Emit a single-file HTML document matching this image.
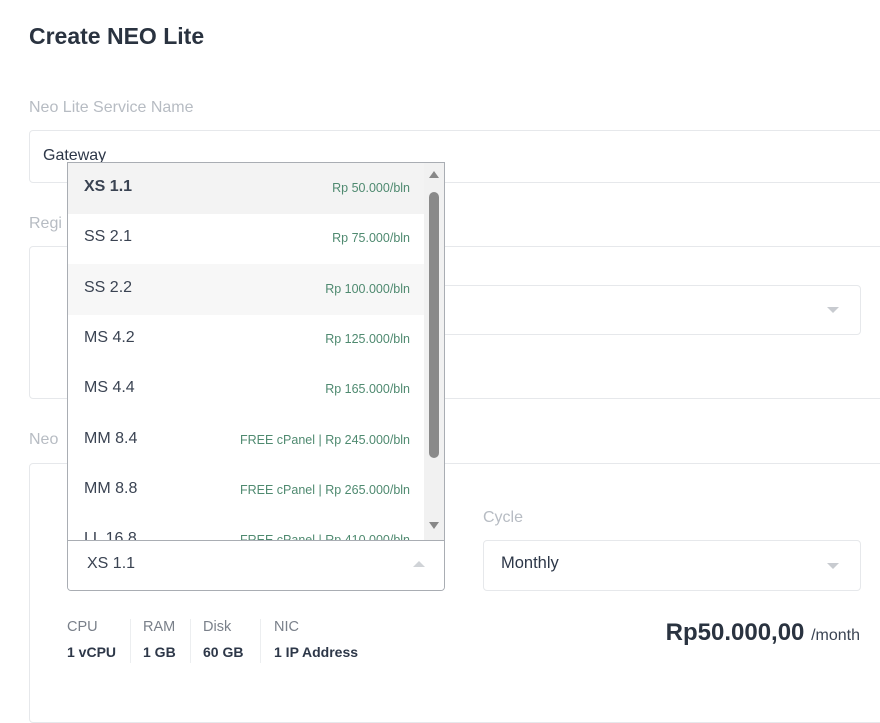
<!DOCTYPE html>
<html><head><style>
*{box-sizing:border-box;margin:0;padding:0}
body{width:880px;height:695px;overflow:hidden;background:#fff;font-family:"Liberation Sans",sans-serif;position:relative;color:#2d3748}
.a{position:absolute}
h1{position:absolute;left:29px;top:23px;font-size:23px;font-weight:bold;color:#2a3340}
.lbl{position:absolute;color:#b7bcc3;font-size:16px}
.box{position:absolute;border:1px solid #e6e8eb;border-radius:4px;background:#fff}
.caret{position:absolute;width:0;height:0;border-left:6px solid transparent;border-right:6px solid transparent;border-top:6px solid #c8cbd0}
.dd{position:absolute;left:67px;top:162px;width:378px;height:429px;border:1px solid #a9adb3;border-radius:0 0 4px 4px;background:#fff;overflow:hidden}
.it{position:absolute;left:0;width:356px;height:51px;font-size:16px;color:#3a4352}
.it .n{position:absolute;left:16px;top:15px}
.it .p{position:absolute;right:14px;top:18px;font-size:12.5px;color:#4f8a70}
.sp{position:absolute;top:619px;height:44px;border-right:1px solid #eceef0;font-size:14.5px}
.sp .t{color:#7a808a}.sp .v{font-weight:bold;color:#2d3748;font-size:14px;margin-top:9px}
</style></head><body>
<h1>Create NEO Lite</h1>
<div class="lbl" style="left:29px;top:99px">Neo Lite Service Name</div>
<div class="box" style="left:29px;top:130px;width:870px;height:53px"></div>
<div class="a" style="left:43px;top:147px;font-size:16px;color:#2d3748">Gateway</div>
<div class="lbl" style="left:29px;top:215px">Regi</div>
<div class="box" style="left:29px;top:246px;width:870px;height:153px"></div>
<div class="box" style="left:420px;top:285px;width:441px;height:50px"></div>
<div class="caret" style="left:827px;top:307px"></div>
<div class="lbl" style="left:29px;top:431px">Neo</div>
<div class="box" style="left:29px;top:463px;width:870px;height:260px"></div>
<div class="lbl" style="left:483px;top:509px">Cycle</div>
<div class="box" style="left:483px;top:540px;width:378px;height:51px"></div>
<div class="a" style="left:501px;top:554px;font-size:16.5px;color:#2d3748">Monthly</div>
<div class="caret" style="left:827px;top:563px"></div>
<div class="a" style="right:20px;top:619px;font-size:24px;font-weight:bold;color:#2a3340;white-space:nowrap">Rp50.000,00 <span style="font-size:16px;font-weight:normal;color:#3a4352">/month</span></div>
<div class="sp" style="left:67px;width:64px"><div class="t">CPU</div><div class="v">1 vCPU</div></div>
<div class="sp" style="left:143px;width:48px"><div class="t">RAM</div><div class="v">1 GB</div></div>
<div class="sp" style="left:203px;width:58px"><div class="t">Disk</div><div class="v">60 GB</div></div>
<div class="sp" style="left:274px;width:100px;border:none"><div class="t">NIC</div><div class="v">1 IP Address</div></div>
<div class="dd">
<div class="it" style="top:0;background:#f3f3f3"><span class="n" style="font-weight:bold">XS 1.1</span><span class="p">Rp 50.000/bln</span></div>
<div class="it" style="top:50px"><span class="n">SS 2.1</span><span class="p">Rp 75.000/bln</span></div>
<div class="it" style="top:101px;background:#f7f7f7"><span class="n">SS 2.2</span><span class="p">Rp 100.000/bln</span></div>
<div class="it" style="top:151px"><span class="n">MS 4.2</span><span class="p">Rp 125.000/bln</span></div>
<div class="it" style="top:201px"><span class="n">MS 4.4</span><span class="p">Rp 165.000/bln</span></div>
<div class="it" style="top:252px"><span class="n">MM 8.4</span><span class="p">FREE cPanel | Rp 245.000/bln</span></div>
<div class="it" style="top:302px"><span class="n">MM 8.8</span><span class="p">FREE cPanel | Rp 265.000/bln</span></div>
<div class="it" style="top:352px"><span class="n">LL 16.8</span><span class="p">FREE cPanel | Rp 410.000/bln</span></div>
<div class="a" style="left:356px;top:0;width:20px;height:377px;background:#f1f1f1"></div>
<div class="a" style="left:361px;top:8px;width:0;height:0;border-left:5px solid transparent;border-right:5px solid transparent;border-bottom:7px solid #888"></div>
<div class="a" style="left:361px;top:29px;width:10px;height:266px;border-radius:5px;background:#8a8a8a"></div>
<div class="a" style="left:361px;top:359px;width:0;height:0;border-left:5px solid transparent;border-right:5px solid transparent;border-top:7px solid #888"></div>
<div class="a" style="left:0;top:377px;width:378px;height:52px;background:#fff;border-top:1px solid #a9adb3"></div>
<div class="a" style="left:19px;top:392px;font-size:16px;color:#3a4352">XS 1.1</div>
<div class="a" style="left:345px;top:398px;width:0;height:0;border-left:6px solid transparent;border-right:6px solid transparent;border-bottom:6px solid #d0d3d7"></div>
</div>
</body></html>
